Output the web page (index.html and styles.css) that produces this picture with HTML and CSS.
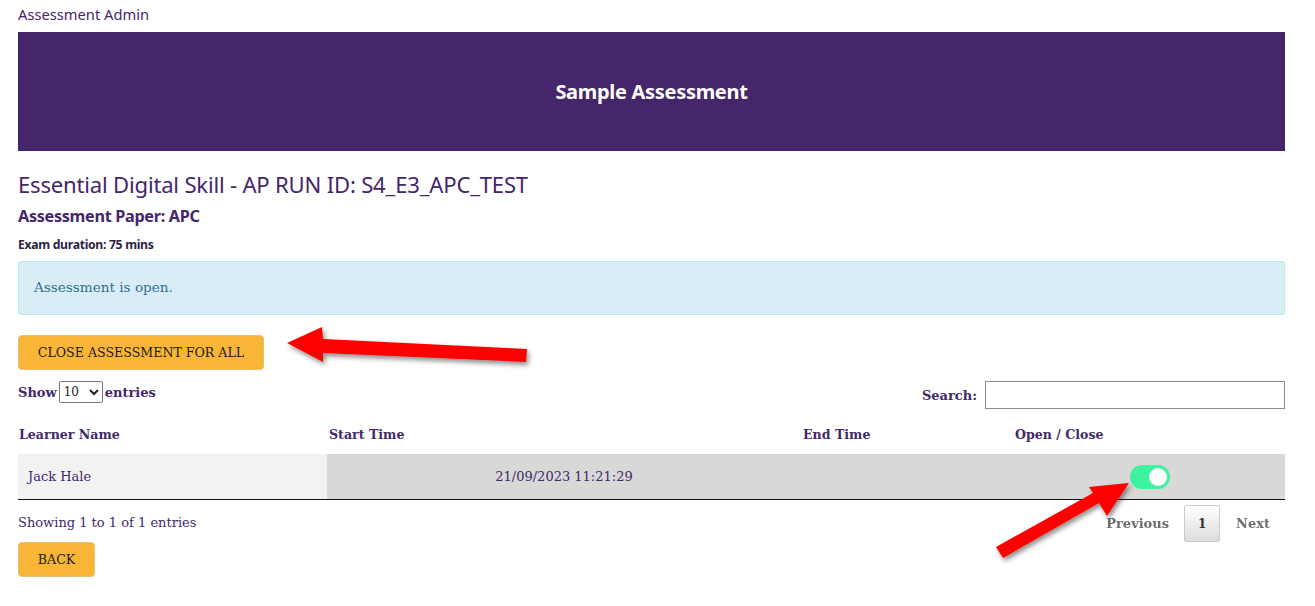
FILE: index.html
```html
<!DOCTYPE html>
<html>
<head>
<meta charset="utf-8">
<link rel="stylesheet" href="styles.css">
</head>
<body>
<div class="page">
  <div class="topbar">Assessment Admin</div>
  <div class="banner"><h1 class="banner-title">Sample Assessment</h1></div>
  <h2 class="run-title">Essential Digital Skill - AP RUN ID: S4_E3_APC_TEST</h2>
  <h3 class="paper">Assessment Paper: APC</h3>
  <h4 class="duration">Exam duration: 75 mins</h4>
  <div class="alert">Assessment is open.</div>
  <button class="btn btn-close">CLOSE ASSESSMENT FOR ALL</button>
  <div class="controls">
    <label class="length">Show <select class="length-select"><option>10</option></select> entries</label>
    <label class="search">Search: <input class="search-input" type="text"></label>
  </div>
  <table class="grid">
    <thead>
      <tr>
        <th class="col-name">Learner Name</th>
        <th class="col-start">Start Time</th>
        <th class="col-end">End Time</th>
        <th class="col-toggle">Open / Close</th>
      </tr>
    </thead>
    <tbody>
      <tr>
        <td class="cell-name">Jack Hale</td>
        <td class="cell-center">21/09/2023 11:21:29</td>
        <td class="cell-center"></td>
        <td class="cell-center"><span class="toggle"><span class="knob"></span></span></td>
      </tr>
    </tbody>
  </table>
  <div class="footer-row">
    <div class="info">Showing 1 to 1 of 1 entries</div>
    <div class="pager">
      <span class="pager-link">Previous</span>
      <span class="pager-current">1</span>
      <span class="pager-link">Next</span>
    </div>
  </div>
  <button class="btn btn-back">BACK</button>
</div>
<svg class="arrows" width="1315" height="606" viewBox="0 0 1315 606">
  <defs>
    <filter id="sh" x="-20%" y="-50%" width="140%" height="200%">
      <feDropShadow dx="2" dy="3" stdDeviation="2.5" flood-color="#000" flood-opacity="0.45"/>
    </filter>
  </defs>
  <polygon filter="url(#sh)" fill="#ff0000" points="287,343 322,327 323,339 527,349 526,362 323,353 323,362"/>
  <polygon filter="url(#sh)" fill="#ff0000" points="1129,483 1107,516 1099,503 1003,558 996,547 1093,493 1089,487"/>
</svg>
</body>
</html>
```
FILE: styles.css
```css
html, body {
  margin: 0;
  padding: 0;
  background: #ffffff;
}
body {
  font-family: "DejaVu Serif", serif;
  color: #43286a;
  position: relative;
}
.page {
  padding: 5px 30px 0 18px;
}
.topbar {
  font-family: "Noto Sans", "Open Sans", sans-serif;
  font-size: 14.7px;
  line-height: 19px;
  color: #45266b;
  height: 27px;
}
.banner {
  background: #45266b;
  height: 119px;
  display: flex;
  align-items: center;
  justify-content: center;
}
.banner-title {
  margin: 0;
  font-family: "Noto Sans", "Open Sans", sans-serif;
  font-size: 20px;
  font-weight: 700;
  color: #ffffff;
  letter-spacing: -0.3px;
  padding-bottom: 1px;
}
.run-title {
  margin: 20px 0 0 0;
  font-family: "Noto Sans", "Open Sans", sans-serif;
  font-weight: 400;
  font-size: 22.1px;
  line-height: 26px;
  color: #45266b;
  letter-spacing: -0.2px;
}
.paper {
  margin: 9px 0 0 0;
  font-family: "Noto Sans", "Open Sans", sans-serif;
  font-weight: 700;
  font-size: 16.2px;
  line-height: 20px;
  color: #45266b;
  letter-spacing: -0.3px;
}
.duration {
  margin: 11px 0 0 0;
  font-family: "Noto Sans", "Open Sans", sans-serif;
  font-weight: 700;
  font-size: 12.2px;
  line-height: 16px;
  color: #2d1f44;
  letter-spacing: -0.3px;
}
.alert {
  margin-top: 8px;
  background: #d9edf7;
  border: 1px solid #bce8f1;
  border-radius: 3px;
  color: #31708f;
  font-size: 13.6px;
  line-height: 20px;
  padding: 15px 15px 17px 15px;
}
.btn {
  display: block;
  background: #f9b536;
  border: 1px solid #e8c07a;
  border-radius: 4px;
  font-family: "DejaVu Serif", serif;
  color: #1b1b1b;
  font-size: 12.6px;
  line-height: 20px;
  padding: 6px 18px;
  cursor: pointer;
}
.btn-close {
  margin-top: 20px;
  width: 246px;
  height: 35px;
  padding: 0;
}
.btn-back {
  margin-top: 1px;
  width: 77px;
  height: 35px;
  padding: 0;
}
.controls {
  display: flex;
  justify-content: space-between;
  align-items: flex-start;
  margin-top: 10px;
  height: 36px;
}
.length {
  font-size: 13px;
  font-weight: 700;
  display: flex;
  align-items: center;
  gap: 2px;
  height: 24px;
}
.length-select {
  font-family: "DejaVu Serif", serif;
  font-size: 12px;
  width: 44px;
  height: 22px;
  border: 1px solid #767676;
  border-radius: 2px;
  background: #fff;
  color: #222;
}
.search {
  font-size: 13px;
  font-weight: 700;
  display: flex;
  align-items: center;
  gap: 8px;
  padding-top: 1px;
}
.search-input {
  width: 294px;
  height: 24px;
  border: 1px solid #8a8a8a;
  padding: 1px 2px;
  margin: 0;
}
.grid {
  width: 100%;
  border-collapse: collapse;
  font-size: 13px;
}
.grid th {
  text-align: left;
  font-weight: 700;
  font-size: 12.6px;
  padding: 10px 0 11px 1px;
  line-height: 17px;
}
.col-name { width: 308px; }
.col-start { width: 472px; padding-left: 2px !important; }
.col-end { width: 211px; padding-left: 2px !important; }
.grid td {
  height: 45px;
  padding: 0 10px;
  background: #d8d8d6;
  border-bottom: 1px solid #111111;
  line-height: 18px;
}
.grid td.cell-name {
  background: #f2f2f2;
}
.cell-center {
  text-align: center;
}
.toggle {
  display: inline-flex;
  justify-content: flex-end;
  align-items: center;
  width: 40px;
  height: 24px;
  border-radius: 12px;
  background: #3ef2a0;
  box-sizing: border-box;
  padding: 3px;
  vertical-align: middle;
}
.knob {
  width: 18px;
  height: 18px;
  border-radius: 50%;
  background: #ffffff;
}
.footer-row {
  display: flex;
  justify-content: space-between;
  align-items: flex-start;
  height: 41px;
}
.info {
  font-size: 13px;
  padding-top: 14px;
  line-height: 18px;
}
.pager {
  display: flex;
  align-items: center;
  gap: 0;
  padding-top: 5px;
  margin-right: 0;
}
.pager-link {
  color: #666666;
  font-size: 13px;
  font-weight: 700;
  padding: 0 15px 0 16px;
  opacity: 0.95;
}
.pager-current {
  display: inline-flex;
  align-items: center;
  justify-content: center;
  width: 34px;
  height: 35px;
  border: 1px solid #cacaca;
  background: linear-gradient(#ffffff, #dcdcdc);
  color: #333;
  font-size: 12px;
  font-weight: 700;
  border-radius: 2px;
}
.arrows {
  position: absolute;
  left: 0;
  top: 0;
  pointer-events: none;
}
```
